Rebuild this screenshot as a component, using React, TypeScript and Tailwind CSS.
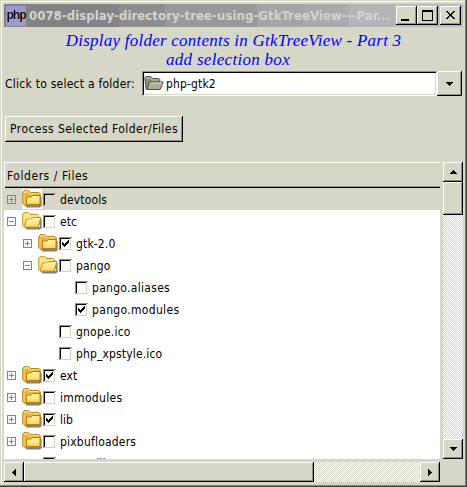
import type { ReactNode } from "react";

const UI = "font-['DejaVu_Sans_Condensed','DejaVu_Sans',sans-serif] [font-stretch:condensed]";
const RAISED =
  "bg-[#d6d7c7] shadow-[inset_-1px_-1px_0_#000,inset_1px_1px_0_#fff,inset_-2px_-2px_0_#948e84]";

function Raised({ className, children }: { className: string; children?: ReactNode }) {
  return <div className={`${RAISED} flex shrink-0 items-center justify-center ${className}`}>{children}</div>;
}

function Arrow({ dir }: { dir: "up" | "down" | "left" | "right" }) {
  const d = {
    up: "M3 0h1v1h1v1h1v1h1v1H0V3h1V2h1V1h1z",
    down: "M0 0h7v1H6v1H5v1H4v1H3V3H2V2H1V1H0z",
    left: "M4 0v7H3V6H2V5H1V4H0V3h1V2h1V1h1V0z",
    right: "M0 0h1v1h1v1h1v1h1v1H3v1H2v1H1v1H0z",
  }[dir];
  const flat = dir === "up" || dir === "down";
  return (
    <svg width={flat ? 7 : 4} height={flat ? 4 : 7} shapeRendering="crispEdges">
      <path d={d} />
    </svg>
  );
}

function Folder({ open }: { open?: boolean }) {
  return (
    <svg width="20" height="20" viewBox="0 0 20 20" className="shrink-0">
      <defs>
        <linearGradient id="gold" x1="0" y1="0" x2="0" y2="1">
          <stop offset="0" stopColor="#fff3a0" />
          <stop offset="0.5" stopColor="#ffe98c" />
          <stop offset="1" stopColor="#f7ce5a" />
        </linearGradient>
      </defs>
      <path d="M3 16h15V8h1.6v9l-1.6 1.6H4.500z" fill="#6b6963" opacity=".85" />
      {open ? (
        <>
          <path d="M.7 14.500V4l1.300-2.300h4.500l1.800 1.800h7l1.200 1.500v9l-1 1.800H2z" fill="#ffe58a" stroke="#c6921f" />
          <path d="M16.500 6.500h2.300v4l-2.300 5.500z" fill="#b58218" />
          <path d="M2 15.800L4.500 8h5l1.500-1.500h7.800l-2.300 8.500-1 1.200H2.700z" fill="url(#gold)" stroke="#c08a18" />
          <path d="M5.500 9h4.500l1.300-1.400h6" fill="none" stroke="#fffbd6" />
        </>
      ) : (
        <>
          <path d="M.7 14.500V4l1.300-2.300h4.500l1.800 1.800h8.500l1.500 1.500v9.500l-1 1.700H2.500z" fill="#e7b542" stroke="#b98514" />
          <path d="M2 4.500l.8-1.700h3.400l1.600 1.700h9" fill="none" stroke="#ffeb9c" />
          <path d="M2 6v8" stroke="#f7d873" />
          <path d="M4.500 15.500V8h4.700l1.300-1.500h7.500v9z" fill="url(#gold)" stroke="#b97e0b" />
        </>
      )}
    </svg>
  );
}

function Expander({ open }: { open?: boolean }) {
  return (
    <svg width="9" height="9" shapeRendering="crispEdges" className="mr-[6px] shrink-0">
      <path d="M.5.5h8v8h-8zM2 4.5h5" fill="none" stroke="#848484" />
      {!open && <path d="M4.5 2v5" stroke="#848484" />}
    </svg>
  );
}

function Check({ on, plain }: { on?: boolean; plain?: boolean }) {
  return (
    <svg width="13" height="13" shapeRendering="crispEdges" className="ml-px shrink-0">
      <path d="M0 0h13v13H0z" fill={plain ? "#d6d7c7" : "#fff"} />
      <path d="M0 0h13v1H1v12H0z" fill="#948e84" />
      <path d="M1 1h11v1H2v10H1z" fill="#000" />
      <path d="M12 1v12H1v-1h10V1z" fill="#d6cfc6" />
      {on && <path d="M3 5h1v1h1v1h1V6h1V5h1V4h1V3h1v3H9v1H8v1H7v1H6v1H5V9H4V8H3z" />}
    </svg>
  );
}

type Item = { name: string; level: number; kind: "closed" | "open" | "file"; on?: boolean; tracking: string };

const items: Item[] = [
  { name: "devtools", level: 0, kind: "closed", tracking: "tracking-[0.15px]" },
  { name: "etc", level: 0, kind: "open", tracking: "tracking-[0.1px]" },
  { name: "gtk-2.0", level: 1, kind: "closed", on: true, tracking: "tracking-[0.15px]" },
  { name: "pango", level: 1, kind: "open", tracking: "tracking-[0.15px]" },
  { name: "pango.aliases", level: 2, kind: "file", tracking: "tracking-[0.3px]" },
  { name: "pango.modules", level: 2, kind: "file", on: true, tracking: "tracking-[0.33px]" },
  { name: "gnope.ico", level: 1, kind: "file", tracking: "tracking-[0.2px]" },
  { name: "php_xpstyle.ico", level: 1, kind: "file", tracking: "tracking-[0.15px]" },
  { name: "ext", level: 0, kind: "closed", on: true, tracking: "tracking-[0.1px]" },
  { name: "immodules", level: 0, kind: "closed", tracking: "tracking-[0.3px]" },
  { name: "lib", level: 0, kind: "closed", on: true, tracking: "tracking-[0px]" },
  { name: "pixbufloaders", level: 0, kind: "closed", tracking: "tracking-[0.2px]" },
  { name: "msvc.dll", level: 0, kind: "file", tracking: "tracking-[0.1px]" },
];

const INDENT = ["pl-[3px]", "pl-[19px]", "pl-[35px]"];
const TROUGH = "bg-[repeating-conic-gradient(#fff_0_25%,#d6d7c7_0_50%)] bg-[length:2px_2px]";

export default function App() {
  return (
    <div className={`${UI} h-[487px] w-[467px] overflow-hidden bg-[#d6d7c7] text-[12px] leading-[22px] whitespace-nowrap text-black shadow-[inset_-1px_-1px_0_#424142,inset_-2px_-2px_0_#848284,inset_1px_1px_0_#d6d7c7,inset_2px_2px_0_#fff]`}>
      <div className="flex flex-col pt-1 pl-1">
        <div className="flex h-[23px] w-[459px] items-center bg-[linear-gradient(90deg,#848284_0_115px,#8f8e8f_115px_161px,#9a999a_161px_253px,#a5a4a5_253px_299px,#adaaad_299px_345px,#b6b4b6_345px_391px,#bdbabd_391px)] pr-[2px] pl-[2px]">
          <div className="flex h-[20px] w-[20px] items-center justify-center bg-[#9c9ace] text-[12px] font-bold text-black">
            <span className="[font-family:'Liberation_Sans',sans-serif] text-[12px] tracking-[-1px] [text-shadow:0_0_1px_#fff] -translate-y-px">php</span>
          </div>
          <span className="ml-[3px] w-[367px] text-[13px] tracking-[0.07px] font-bold text-[#d6d3ce]">0078-display-directory-tree-using-GtkTreeView---Par...</span>
          <Raised className="h-[19px] w-[21px]">
            <svg width="13" height="13" shapeRendering="crispEdges"><path d="M1 10h8v2H1z" /></svg>
          </Raised>
          <Raised className="h-[19px] w-[21px]">
            <svg width="13" height="13" shapeRendering="crispEdges"><path d="M1 1h11v11H1zM2 3v8h9V3z" fillRule="evenodd" /></svg>
          </Raised>
          <Raised className="ml-[2px] h-[19px] w-[21px]">
            <svg width="13" height="13" shapeRendering="crispEdges"><path d="M2 2h2v1h1v1h1v1h1V4h1V3h1V2h2v1h-1v1H9v1H8v2h1v1h1v1h1v1H9V9H8V8H7V7H6v1H5v1H4v1H2V9h1V8h1V7h1V5H4V4H3V3H2z" /></svg>
          </Raised>
        </div>

        <div className="mt-[4px] h-[40px] w-[459px] text-center font-['Liberation_Serif',serif] text-[17px] leading-[19px] text-[#0000ff] italic">
          <div className="tracking-[0.24px]">Display folder contents in GtkTreeView - Part 3</div>
          <div className="pr-[11px] tracking-[0.3px]">add selection box</div>
        </div>

        <div className="flex h-[25px] items-center">
          <span className="ml-px w-[137px] tracking-[0.25px]">Click to select a folder:</span>
          <div className="flex h-[25px] w-[295px] items-center bg-white pl-[2px] shadow-[inset_1px_1px_0_#948e84,inset_-1px_-1px_0_#fff,inset_2px_2px_0_#000,inset_-2px_-2px_0_#d6d7c7]">
            <svg width="20" height="16" viewBox="0 0 20 16" className="-translate-y-px">
              <path d="M2 14L.8 3l1-1.500h5l1.800 2h6.200l1 1v2.500L14 14z" fill="#8c8e78" stroke="#5a5c4c" />
              <path d="M2 3h4.500l1.700 2h6" fill="none" stroke="#c6c8b4" />
              <path d="M2.800 14.500L5.500 7h13.700l-3 7.500z" fill="#adb096" stroke="#4c4e40" />
              <path d="M6.300 8h11.500" stroke="#dcdecb" />
            </svg>
            <span className="ml-[2px] tracking-[0.15px]">php-gtk2</span>
          </div>
          <Raised className="h-[25px] w-[25px]"><Arrow dir="down" /></Raised>
        </div>

        <Raised className="mt-[20px] ml-px h-[26px] w-[178px]"><span className="tracking-[0.44px]">Process Selected Folder/Files</span></Raised>

        <div className="mt-[20px] flex gap-[3px]">
          <div className="h-[297px] w-[436px] overflow-hidden bg-white">
            <div className="h-[26px] border-t border-l border-white bg-[#d6d7c7] pt-[2px] pl-[2px] tracking-[0.55px] shadow-[inset_0_-1px_0_#000,inset_0_-2px_0_#948e84]">Folders / Files</div>
            {items.map((it, i) => (
              <div key={it.name} className={`flex h-[22px] items-center ${INDENT[it.level]} ${i === 0 ? "bg-[#d6d7c7]" : ""}`}>
                {it.kind === "file" ? (
                  <div className="w-[35px] shrink-0" />
                ) : (
                  <>
                    <Expander open={it.kind === "open"} />
                    <div className={i === 0 ? "bg-white" : ""}><Folder open={it.kind === "open"} /></div>
                  </>
                )}
                <Check on={it.on} plain={i === 0} />
                <span className={`ml-[4px] pt-[2px] ${it.tracking}`}>{it.name}</span>
              </div>
            ))}
          </div>
          <div className={`flex h-[297px] w-[20px] flex-col ${TROUGH}`}>
            <Raised className="h-[20px] w-[20px]"><Arrow dir="up" /></Raised>
            <Raised className="h-[33px] w-[20px]" />
            <div className="flex-1" />
            <Raised className="h-[20px] w-[20px]"><Arrow dir="down" /></Raised>
          </div>
        </div>
        <div className={`mt-[3px] flex h-[20px] w-[436px] ${TROUGH}`}>
          <Raised className="h-[20px] w-[20px]"><Arrow dir="left" /></Raised>
          <Raised className="h-[20px] w-[290px]" />
          <div className="flex-1" />
          <Raised className="h-[20px] w-[20px]"><Arrow dir="right" /></Raised>
        </div>
      </div>
    </div>
  );
}
